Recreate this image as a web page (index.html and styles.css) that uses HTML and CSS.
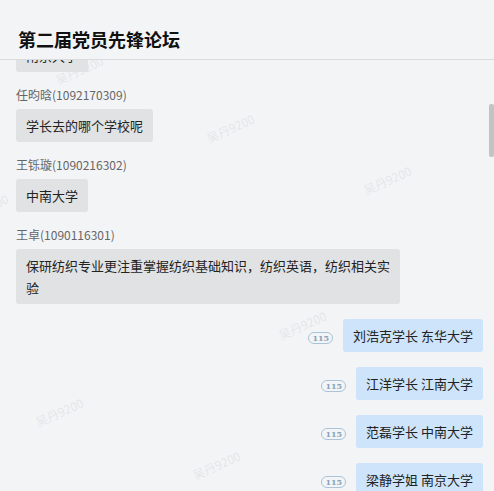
FILE: index.html
```html
<!DOCTYPE html>
<html lang="zh-CN">
<head>
  <meta charset="UTF-8">
  <title>第二届党员先锋论坛</title>
  <link rel="stylesheet" href="styles.css">
</head>
<body>
  <div class="chat">
    <header class="chat-header">
      <h1>第二届党员先锋论坛</h1>
    </header>

    <div class="chat-body">
      <!-- watermark layer -->
      <span class="mark" style="left:54px;top:2px">吴丹9200</span>
      <span class="mark" style="left:205px;top:60px">吴丹9200</span>
      <span class="mark" style="left:362px;top:112px">吴丹9200</span>
      <span class="mark" style="left:-41px;top:140px">吴丹9200</span>
      <span class="mark" style="left:118px;top:198px">吴丹9200</span>
      <span class="mark" style="left:277px;top:257px">吴丹9200</span>
      <span class="mark" style="left:434px;top:315px">吴丹9200</span>
      <span class="mark" style="left:34px;top:344px">吴丹9200</span>
      <span class="mark" style="left:191px;top:397px">吴丹9200</span>

      <div class="msg-list">
        <div class="msg">
          <div class="bubble">南京大学</div>
        </div>
        <div class="msg">
          <div class="msg-name">任昀晗(1092170309)</div>
          <div class="bubble">学长去的哪个学校呢</div>
        </div>
        <div class="msg">
          <div class="msg-name">王铄璇(1090216302)</div>
          <div class="bubble">中南大学</div>
        </div>
        <div class="msg">
          <div class="msg-name">王卓(1090116301)</div>
          <div class="bubble">保研纺织专业更注重掌握纺织基础知识，纺织英语，纺织相关实验</div>
        </div>

        <div class="msg msg-self">
          <span class="read-count">115</span>
          <div class="bubble bubble-self">刘浩克学长 东华大学</div>
        </div>
        <div class="msg msg-self">
          <span class="read-count">115</span>
          <div class="bubble bubble-self">江洋学长 江南大学</div>
        </div>
        <div class="msg msg-self">
          <span class="read-count">115</span>
          <div class="bubble bubble-self">范磊学长 中南大学</div>
        </div>
        <div class="msg msg-self">
          <span class="read-count">115</span>
          <div class="bubble bubble-self">梁静学姐 南京大学</div>
        </div>
      </div>

      <div class="scroll-thumb"></div>
    </div>
  </div>
</body>
</html>
```

FILE: styles.css
```css
body {
  margin: 0;
  font-family: "Noto Sans CJK SC", "Noto Sans", sans-serif;
  background-color: #f3f4f6;
  color: #222;
}

.chat {
  height: 491px;
  display: flex;
  flex-direction: column;
  overflow: hidden;
}

.chat-header {
  height: 60px;
  box-sizing: border-box;
  padding: 27px 18px 0;
  border-bottom: 1px solid #dadbdd;
  background-color: #f3f4f6;
  position: relative;
  z-index: 2;
}

.chat-header h1 {
  margin: 0;
  font-size: 18px;
  line-height: 24px;
  font-weight: bold;
  color: #111;
}

.chat-body {
  flex: 1;
  position: relative;
  overflow: hidden;
}

.msg-list {
  position: relative;
  z-index: 1;
  display: flex;
  flex-direction: column;
  gap: 15px;
  margin-top: -21px;
  padding: 0 11px 0 16px;
}

.msg {
  display: flex;
  flex-direction: column;
  align-items: flex-start;
  gap: 6px;
}

.msg-name {
  font-size: 12px;
  line-height: 16px;
  color: #666;
}

.bubble {
  max-width: 78%;
  padding: 6px 10px 5px;
  font-size: 13px;
  line-height: 22px;
  background-color: #e1e2e4;
  border-radius: 3px;
  color: #222;
}

.msg-self {
  flex-direction: row;
  justify-content: flex-end;
  align-items: center;
  gap: 10px;
}

.bubble-self {
  background-color: #cde4fa;
}

.read-count {
  margin-top: 4px;
  padding: 0 3px;
  height: 10px;
  line-height: 10px;
  font-size: 8px;
  font-weight: bold;
  font-family: "DejaVu Serif", serif;
  color: #8aa3ba;
  border: 1px solid #a9c3da;
  border-radius: 6px;
}

.mark {
  position: absolute;
  width: 52px;
  height: 16px;
  font-size: 12px;
  line-height: 16px;
  white-space: nowrap;
  color: rgba(160, 165, 175, 0.2);
  transform: rotate(-24deg);
}

.scroll-thumb {
  position: absolute;
  right: 0;
  top: 44px;
  width: 5px;
  height: 53px;
  background-color: #c2c3c5;
  border-radius: 2px;
  z-index: 3;
}
```
